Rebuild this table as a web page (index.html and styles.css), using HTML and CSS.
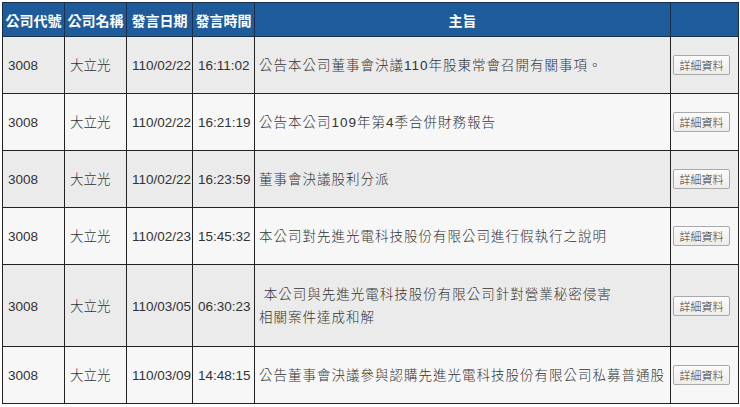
FILE: index.html
```html
<!DOCTYPE html>
<html lang="zh-Hant">
<head>
<meta charset="utf-8">
<title>重大訊息</title>
<link rel="stylesheet" href="styles.css">
</head>
<body>
<div class="wrap">
<table class="news">
  <colgroup>
    <col class="c-code"><col class="c-name"><col class="c-date"><col class="c-time"><col class="c-subj"><col class="c-btn">
  </colgroup>
  <thead>
    <tr>
      <th>公司代號</th><th>公司名稱</th><th>發言日期</th><th>發言時間</th><th>主旨</th><th></th>
    </tr>
  </thead>
  <tbody>
    <tr class="odd">
      <td>3008</td><td>大立光</td><td>110/02/22</td><td>16:11:02</td>
      <td class="subj">公告本公司董事會決議110年股東常會召開有關事項。</td>
      <td class="act"><button class="btn" type="button">詳細資料</button></td>
    </tr>
    <tr class="even">
      <td>3008</td><td>大立光</td><td>110/02/22</td><td>16:21:19</td>
      <td class="subj">公告本公司109年第4季合併財務報告</td>
      <td class="act"><button class="btn" type="button">詳細資料</button></td>
    </tr>
    <tr class="odd">
      <td>3008</td><td>大立光</td><td>110/02/22</td><td>16:23:59</td>
      <td class="subj">董事會決議股利分派</td>
      <td class="act"><button class="btn" type="button">詳細資料</button></td>
    </tr>
    <tr class="even">
      <td>3008</td><td>大立光</td><td>110/02/23</td><td>15:45:32</td>
      <td class="subj">本公司對先進光電科技股份有限公司進行假執行之說明</td>
      <td class="act"><button class="btn" type="button">詳細資料</button></td>
    </tr>
    <tr class="odd tall">
      <td>3008</td><td>大立光</td><td>110/03/05</td><td>06:30:23</td>
      <td class="subj two">&nbsp;本公司與先進光電科技股份有限公司針對營業秘密侵害<br>相關案件達成和解</td>
      <td class="act"><button class="btn" type="button">詳細資料</button></td>
    </tr>
    <tr class="even">
      <td>3008</td><td>大立光</td><td>110/03/09</td><td>14:48:15</td>
      <td class="subj">公告董事會決議參與認購先進光電科技股份有限公司私募普通股</td>
      <td class="act"><button class="btn" type="button">詳細資料</button></td>
    </tr>
  </tbody>
</table>
</div>
</body>
</html>
```

FILE: styles.css
```css
html, body {
  margin: 0;
  padding: 0;
  background: #ffffff;
}

.wrap {
  padding: 2px 2px 0 2px;
}

.news {
  width: 736px;
  table-layout: fixed;
  border-collapse: collapse;
  font-family: "Liberation Sans", "Noto Sans CJK TC", Arial, sans-serif;
  font-size: 13.5px;
  font-weight: 300;
  color: #333333;
  border: 1px solid #222222;
}

.c-code { width: 62px; }
.c-name { width: 62px; }
.c-date { width: 66px; }
.c-time { width: 62px; }
.c-subj { width: 416px; }
.c-btn  { width: 68px; }

.news th {
  background: #1d5b9b;
  color: #ffffff;
  font-weight: bold;
  font-size: 14px;
  height: 33px;
  padding: 0;
  text-align: center;
  vertical-align: middle;
  border: 1px solid #1a2f4a;
  white-space: nowrap;
}

.news td {
  border: 1px solid #222222;
  padding: 18px 0 18px 5px;
  line-height: 19px;
  height: 19px;
  vertical-align: middle;
  text-align: left;
  white-space: nowrap;
  overflow: hidden;
}

.news tr.odd td { background: #ebebeb; }
.news tr.even td { background: #f7f7f7; }

.news tr.tall td {
  padding-top: 18px;
  padding-bottom: 17px;
}

.news td.subj {
  letter-spacing: 1px;
  padding-left: 4px;
}

.news td.two {
  line-height: 23px;
}

.news td.act {
  padding-left: 2px;
  padding-right: 0;
}

.btn {
  display: block;
  width: 57px;
  height: 20px;
  padding: 0;
  margin: 0;
  font-family: "Noto Sans CJK TC", sans-serif;
  font-size: 11px;
  font-weight: 300;
  line-height: 18px;
  color: #333333;
  background: linear-gradient(#fbfbfb, #ececec);
  border: 1px solid #a9a9a9;
  border-radius: 2px;
  cursor: pointer;
}
```
